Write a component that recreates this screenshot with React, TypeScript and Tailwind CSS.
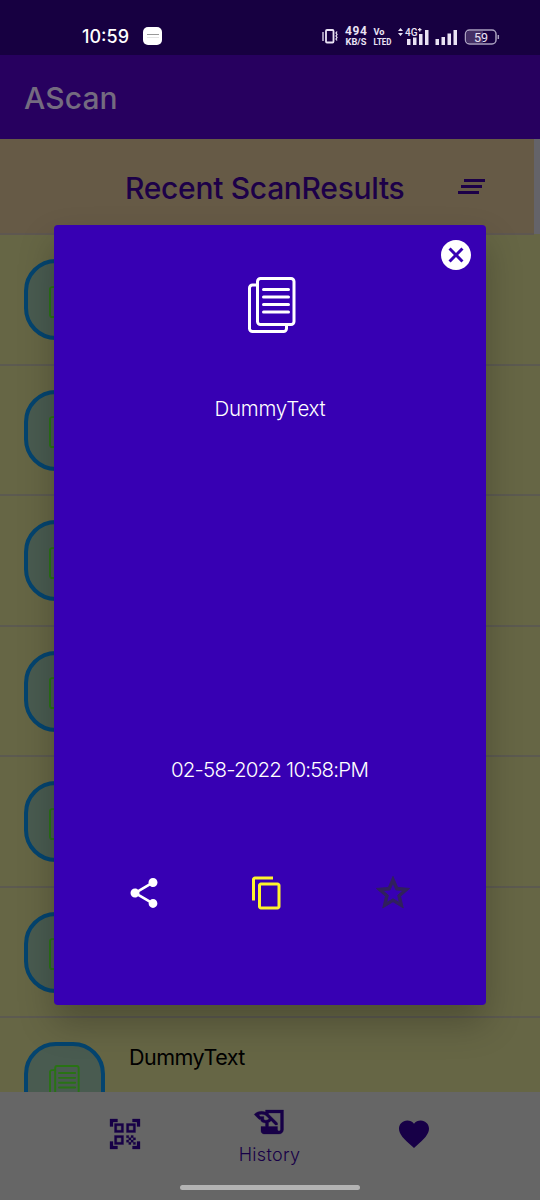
import type { ReactNode } from "react";
import { MdShare, MdContentCopy, MdStarBorder, MdFavorite, MdHistoryEdu, MdQrCodeScanner, MdCancel } from "react-icons/md";

function PagesIcon({ className }: { className: string }) {
  return (
    <svg viewBox="0 0 48 56" fill="none" stroke="currentColor" strokeWidth="3" strokeLinecap="round" className={className}>
      <rect x="9.5" y="1.5" width="36.5" height="46" rx="3" />
      <path d="M9.5 8H4.500a3 3 0 0 0-3 3v40.500a3 3 0 0 0 3 3h31a3 3 0 0 0 3-3v-4" />
      <path d="M15.500 12.500h25M15.500 20h25M15.500 27.500h25M15.500 35h25" />
    </svg>
  );
}

function Fit({ children, className }: { children: ReactNode; className: string }) {
  return <span className={`block whitespace-nowrap leading-none ${className}`}>{children}</span>;
}

function StatusBar() {
  return (
    <div className="flex h-[55px] shrink-0 items-center bg-[#170041] pt-[17px] text-white">
      <Fit className="ml-[82px] w-[50px] pt-px text-[18px] font-medium">10:59</Fit>
      <div className="ml-[11px] flex h-[18px] w-[19px] flex-col items-center justify-center gap-[2px] rounded-[5px] bg-white">
        <div className="h-px w-[12px] bg-[#999]" />
        <div className="h-px w-[12px] bg-[#e5e5e5]" />
      </div>
      <svg viewBox="0 0 180 24" className="ml-[159px] h-6 w-[180px] text-[#eae3f4]" fill="none" stroke="currentColor">
        <path d="M2 8v9M16 7.500l-1 1.500 1 1.500-1 1.500 1 1.500-1 1.500 1 1.500" strokeWidth="1.300" />
        <rect x="5" y="6" width="7.500" height="12.500" rx="1" strokeWidth="1.800" />
        <g fill="currentColor" stroke="none" fontFamily="Roboto, sans-serif" fontWeight="700">
          <text x="24" y="11" fontSize="12" textLength="22">494</text>
          <text x="24.500" y="20.500" fontSize="9" fontWeight="700" textLength="21" lengthAdjust="spacingAndGlyphs">KB/S</text>
          <text x="52.500" y="11" fontSize="9.500" fontWeight="700" textLength="11" lengthAdjust="spacingAndGlyphs">Vo</text>
          <text x="52.500" y="20.500" fontSize="9" textLength="18" lengthAdjust="spacingAndGlyphs">LTED</text>
          <path d="m77 7 2.500-3 2.500 3zM77 9l2.500 3 2.500-3z" />
          <text x="84" y="12" fontSize="11.500" fontWeight="500" textLength="12.500" lengthAdjust="spacingAndGlyphs">4G</text>
          <path d="M86 15h3.500v6H86zM92 13.500h3.500V21H92zM98 10h3.500v11H98zM104 6h3.500v15H104zM97 5h3.500v1.300H97zM98.100 4h1.300v3.500h-1.300z" />
          <path d="M114.500 15h3.500v6h-3.500zM120.500 13h3.500v8h-3.500zM126.500 9.500h3.500V21h-3.500zM132.500 6h3.500v15h-3.500z" />
        </g>
        <rect x="144.500" y="6" width="30.500" height="14" rx="4" fill="#170041" stroke="#aaa0bf" strokeWidth="1.500" />
        <path d="M148 7h14v12h-14a2.500 2.500 0 0 1-2.500-2.500v-7A2.500 2.500 0 0 1 148 7z" fill="#453065" stroke="none" />
        <path d="M177.300 11v4" stroke="#aaa0bf" strokeWidth="1.500" />
        <text x="153" y="17.500" fontFamily="Roboto, sans-serif" fontSize="12.500" fill="currentColor" stroke="none">59</text>
      </svg>
    </div>
  );
}

function HistoryRow({ label }: { label?: string }) {
  return (
    <div className="flex h-[130.500px] shrink-0 items-start border-b-2 border-[#5c5a50] pt-6">
      <div className="ml-6 flex h-[81px] w-[81px] items-center justify-center rounded-[32px] border-[4.500px] border-[#04446f] bg-[#495b50]">
        <PagesIcon className="h-[36px] w-[31px] text-[#297314]" />
      </div>
      {label && <Fit className="ml-6 mt-[5px] text-[21.500px] tracking-[-0.5px] text-black">{label}</Fit>}
    </div>
  );
}

const ROWS: { id: number; label?: string }[] = [
  { id: 1 },
  { id: 2 },
  { id: 3 },
  { id: 4 },
  { id: 5 },
  { id: 6 },
  { id: 7, label: "DummyText" },
];

export default function App() {
  return (
    <div className="relative flex h-[1200px] w-[540px] flex-col overflow-hidden bg-[#666666] font-['Inter',sans-serif]">
      <StatusBar />
      <header className="flex h-[84px] shrink-0 items-center bg-[#27005f] pl-6">
        <Fit className="pt-[2px] text-[30px] font-medium tracking-[0.1px] text-[#746b80]">AScan</Fit>
      </header>
      <main className="flex h-[953px] shrink-0 flex-col overflow-hidden bg-[#666645]">
        <div className="flex h-[96px] shrink-0">
          <div className="flex w-[534px] items-center border-b-2 border-[#5e5750] bg-[#665a46]">
            <Fit className="ml-[125px] w-[280px] pt-[4px] text-[30px] font-medium tracking-[-0.3px] text-[#1c0048]">Recent ScanResults</Fit>
            <svg viewBox="0 0 28 16" className="ml-[53px] mt-[2px] h-4 w-7" fill="#1c0048">
              <path d="M6 0h21v3H6zM3 6h21v3H3zM0 12h21v3H0z" />
            </svg>
          </div>
          <div className="h-[95px] w-[6px] bg-[#646369]" />
        </div>
        {ROWS.map((row) => <HistoryRow key={row.id} label={row.label} />)}
      </main>
      <nav className="relative h-[108px] shrink-0 bg-[#666666] text-[#170047]">
        <div className="flex h-[84px] justify-between pl-[107px] pr-[108px]">
          <MdQrCodeScanner className="mt-[24px] size-9 stroke-current [stroke-width:0.2px] [&>path[fill=none]]:stroke-none" />
          <div className="flex w-[64px] flex-col items-center pt-[12px]">
            <MdHistoryEdu className="size-9 stroke-current [stroke-width:0.2px] [&>path[fill=none]]:stroke-none" />
            <Fit className="mt-[6px] text-[18px] font-light tracking-[0.3px]">History</Fit>
          </div>
          <MdFavorite className="mt-[24px] size-9" />
        </div>
        <div className="mx-auto mt-[9px] h-[5px] w-[180px] rounded-full bg-[#b3b3b3]" />
      </nav>
      <section className="absolute left-[54px] top-[225px] flex h-[780px] w-[432px] flex-col items-center rounded-[4px] bg-[#3700b3] text-white shadow-[0_18px_36px_rgba(0,0,0,0.24)]">
        <div className="flex w-full justify-end pr-3 pt-3">
          <MdCancel className="size-9" />
        </div>
        <PagesIcon className="ml-[3px] mt-[4px] h-14 w-12" />
        <Fit className="mt-[65.500px] text-[20.500px] font-light tracking-[-0.25px]">DummyText</Fit>
        <Fit className="mt-[341px] mr-px text-[20.500px] font-light tracking-[-0.8px]">02-58-2022 10:58:PM</Fit>
        <div className="mt-[92.500px] flex w-full items-center justify-between pl-[72px] pr-[73px]">
          <MdShare className="size-9" />
          <MdContentCopy className="mr-px size-9" color="#fff42c" />
          <MdStarBorder className="size-10 stroke-current text-[#30205c] [stroke-width:0.5px] [&>path[fill=none]]:stroke-none" />
        </div>
      </section>
    </div>
  );
}
